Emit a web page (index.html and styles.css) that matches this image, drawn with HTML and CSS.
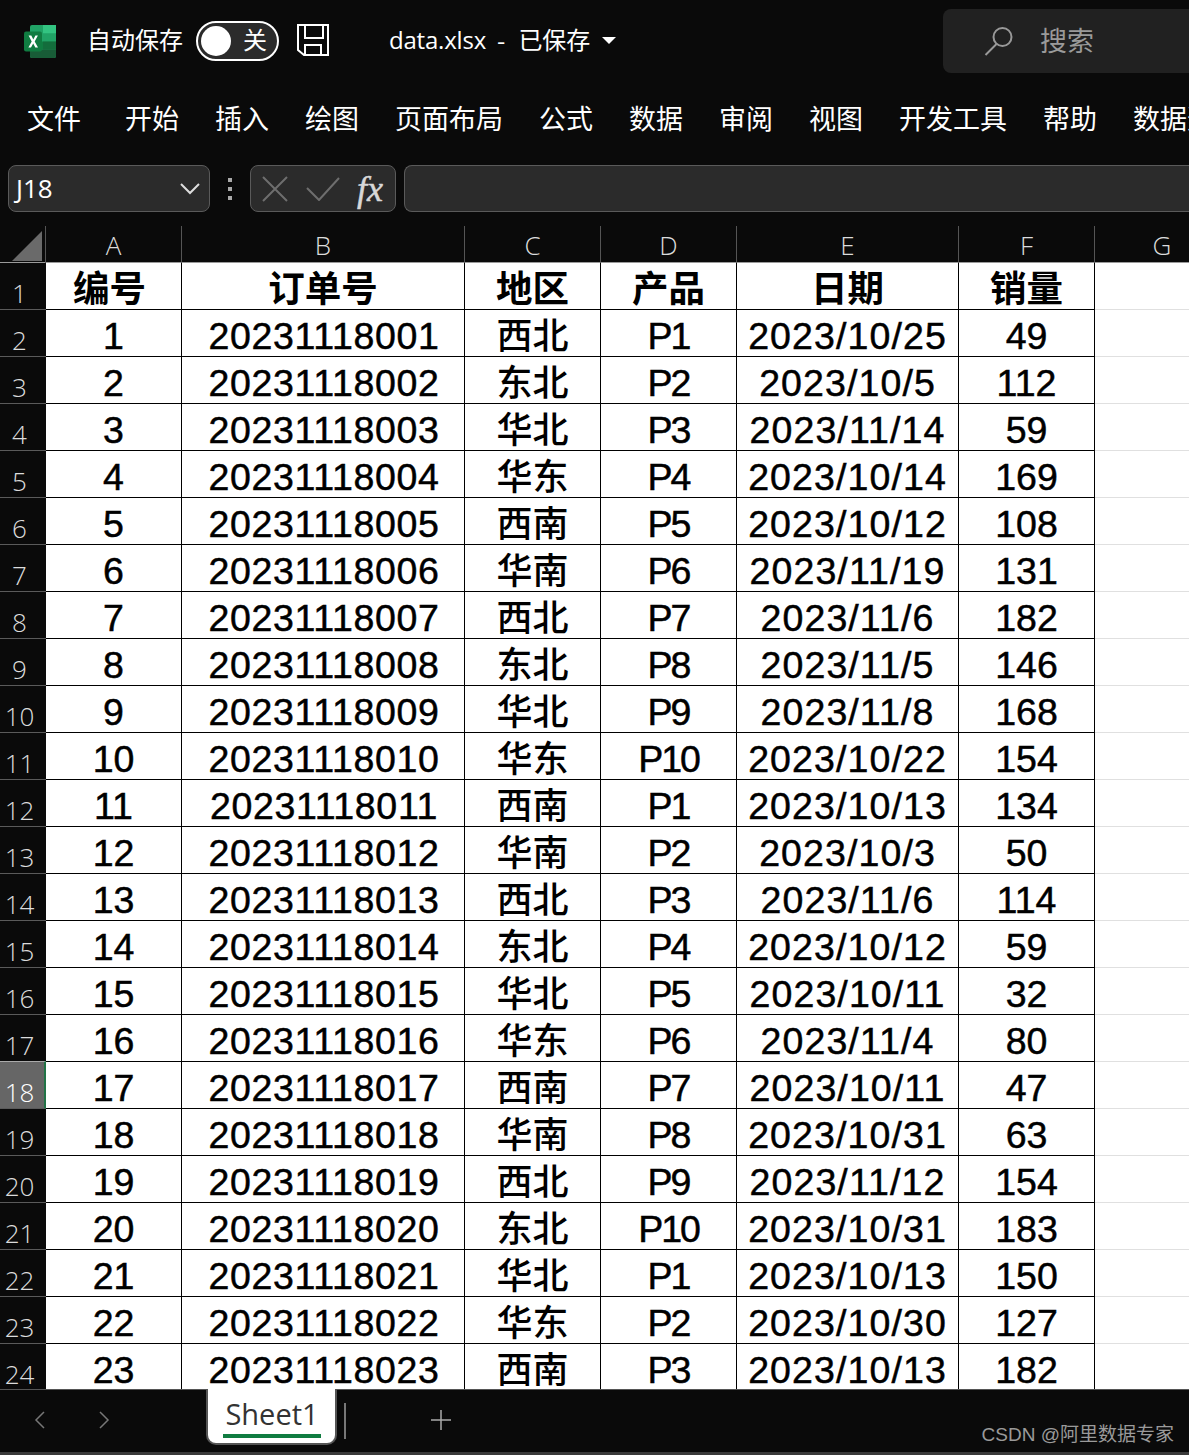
FILE: index.html
```html
<!DOCTYPE html>
<html lang="zh-CN">
<head>
<meta charset="utf-8">
<title>data.xlsx</title>
<link rel="stylesheet" href="styles.css">
</head>
<body>
<div class="app">
  <header class="titlebar">
    <svg class="xl-icon" viewBox="0 0 32 33" width="32" height="33">
      <rect x="6" y="0" width="26" height="33" rx="2" fill="#21a366"/>
      <rect x="19" y="0" width="13" height="8.500" fill="#33c481"/>
      <rect x="19" y="8.500" width="13" height="8" fill="#21a366"/>
      <rect x="6" y="16.500" width="26" height="8" fill="#107c41"/>
      <rect x="19" y="16.500" width="13" height="8" fill="#185c37" opacity=".45"/>
      <path d="M6 24.500h26V31a2 2 0 0 1-2 2H8a2 2 0 0 1-2-2z" fill="#185c37"/>
      <rect x="0" y="6.500" width="18" height="20" rx="2" fill="#107c41"/>
      <path d="M4.600 10.500h2.700l2 4 2.100-4h2.500l-3.200 5.900 3.300 6.100h-2.700l-2.100-4.100L7 22.500H4.400l3.300-6.100z" fill="#fff"/>
    </svg>
    <span class="autosave">自动保存</span>
    <span class="toggle"><span class="knob"></span><span class="toggle-text">关</span></span>
    <svg class="save-icon" viewBox="0 0 32 33" width="32" height="33" fill="none" stroke="#fff" stroke-width="2">
      <path d="M1 1h30v30H7l-6-5z"/>
      <path d="M8 1v13h18V1"/>
      <path d="M8 31V21h16v10"/>
    </svg>
    <span class="filename">data.xlsx</span>
    <span class="dash">-</span>
    <span class="saved">已保存</span>
    <span class="caret"></span>
    <div class="search">
      <svg class="search-icon" viewBox="0 0 30 30" width="30" height="30" fill="none" stroke="#999" stroke-width="2">
        <circle cx="18.500" cy="11" r="9"/>
        <path d="M12.500 18L1.500 29"/>
      </svg>
      <span class="search-text">搜索</span>
    </div>
  </header>
  <nav class="menu">
    <span class="menu-first">文件</span><span>开始</span><span>插入</span><span>绘图</span><span>页面布局</span><span>公式</span><span>数据</span><span>审阅</span><span>视图</span><span>开发工具</span><span>帮助</span><span>数据透视</span>
  </nav>
  <div class="formula">
    <div class="namebox">
      <span class="name">J18</span>
      <svg viewBox="0 0 20 12" width="20" height="12" fill="none" stroke="#ddd" stroke-width="2"><path d="M1 1l9 9 9-9"/></svg>
    </div>
    <div class="dots"><i></i><i></i><i></i></div>
    <div class="fxbox">
      <svg viewBox="0 0 26 26" width="26" height="26" fill="none" stroke="#6e6e6e" stroke-width="2"><path d="M1 1l24 24M25 1L1 25"/></svg>
      <svg class="check" viewBox="0 0 34 24" width="34" height="24" fill="none" stroke="#6e6e6e" stroke-width="2"><path d="M1 11l12 12L33 1"/></svg>
      <span class="fx">fx</span>
    </div>
    <div class="input"></div>
  </div>
  <main class="sheet">
    <div class="colheads">
      <div class="corner"><span class="tri"></span></div>
      <div class="ch">A</div><div class="ch">B</div><div class="ch">C</div><div class="ch">D</div><div class="ch">E</div><div class="ch">F</div><div class="ch last">G</div>
    </div>
    <div class="grid">
      <div class="rh">1</div><div class="c th th-a">编号</div><div class="c th">订单号</div><div class="c th">地区</div><div class="c th">产品</div><div class="c th">日期</div><div class="c th">销量</div><div class="e"></div>
      <div class="rh">2</div><div class="c">1</div><div class="c id">20231118001</div><div class="c zh">西北</div><div class="c pr">P1</div><div class="c dt">2023/10/25</div><div class="c">49</div><div class="e"></div>
      <div class="rh">3</div><div class="c">2</div><div class="c id">20231118002</div><div class="c zh">东北</div><div class="c pr">P2</div><div class="c dt">2023/10/5</div><div class="c">112</div><div class="e"></div>
      <div class="rh">4</div><div class="c">3</div><div class="c id">20231118003</div><div class="c zh">华北</div><div class="c pr">P3</div><div class="c dt">2023/11/14</div><div class="c">59</div><div class="e"></div>
      <div class="rh">5</div><div class="c">4</div><div class="c id">20231118004</div><div class="c zh">华东</div><div class="c pr">P4</div><div class="c dt">2023/10/14</div><div class="c">169</div><div class="e"></div>
      <div class="rh">6</div><div class="c">5</div><div class="c id">20231118005</div><div class="c zh">西南</div><div class="c pr">P5</div><div class="c dt">2023/10/12</div><div class="c">108</div><div class="e"></div>
      <div class="rh">7</div><div class="c">6</div><div class="c id">20231118006</div><div class="c zh">华南</div><div class="c pr">P6</div><div class="c dt">2023/11/19</div><div class="c">131</div><div class="e"></div>
      <div class="rh">8</div><div class="c">7</div><div class="c id">20231118007</div><div class="c zh">西北</div><div class="c pr">P7</div><div class="c dt">2023/11/6</div><div class="c">182</div><div class="e"></div>
      <div class="rh">9</div><div class="c">8</div><div class="c id">20231118008</div><div class="c zh">东北</div><div class="c pr">P8</div><div class="c dt">2023/11/5</div><div class="c">146</div><div class="e"></div>
      <div class="rh">10</div><div class="c">9</div><div class="c id">20231118009</div><div class="c zh">华北</div><div class="c pr">P9</div><div class="c dt">2023/11/8</div><div class="c">168</div><div class="e"></div>
      <div class="rh">11</div><div class="c">10</div><div class="c id">20231118010</div><div class="c zh">华东</div><div class="c pr">P10</div><div class="c dt">2023/10/22</div><div class="c">154</div><div class="e"></div>
      <div class="rh">12</div><div class="c">11</div><div class="c id">20231118011</div><div class="c zh">西南</div><div class="c pr">P1</div><div class="c dt">2023/10/13</div><div class="c">134</div><div class="e"></div>
      <div class="rh">13</div><div class="c">12</div><div class="c id">20231118012</div><div class="c zh">华南</div><div class="c pr">P2</div><div class="c dt">2023/10/3</div><div class="c">50</div><div class="e"></div>
      <div class="rh">14</div><div class="c">13</div><div class="c id">20231118013</div><div class="c zh">西北</div><div class="c pr">P3</div><div class="c dt">2023/11/6</div><div class="c">114</div><div class="e"></div>
      <div class="rh">15</div><div class="c">14</div><div class="c id">20231118014</div><div class="c zh">东北</div><div class="c pr">P4</div><div class="c dt">2023/10/12</div><div class="c">59</div><div class="e"></div>
      <div class="rh">16</div><div class="c">15</div><div class="c id">20231118015</div><div class="c zh">华北</div><div class="c pr">P5</div><div class="c dt">2023/10/11</div><div class="c">32</div><div class="e"></div>
      <div class="rh">17</div><div class="c">16</div><div class="c id">20231118016</div><div class="c zh">华东</div><div class="c pr">P6</div><div class="c dt">2023/11/4</div><div class="c">80</div><div class="e"></div>
      <div class="rh active">18</div><div class="c">17</div><div class="c id">20231118017</div><div class="c zh">西南</div><div class="c pr">P7</div><div class="c dt">2023/10/11</div><div class="c">47</div><div class="e"></div>
      <div class="rh">19</div><div class="c">18</div><div class="c id">20231118018</div><div class="c zh">华南</div><div class="c pr">P8</div><div class="c dt">2023/10/31</div><div class="c">63</div><div class="e"></div>
      <div class="rh">20</div><div class="c">19</div><div class="c id">20231118019</div><div class="c zh">西北</div><div class="c pr">P9</div><div class="c dt">2023/11/12</div><div class="c">154</div><div class="e"></div>
      <div class="rh">21</div><div class="c">20</div><div class="c id">20231118020</div><div class="c zh">东北</div><div class="c pr">P10</div><div class="c dt">2023/10/31</div><div class="c">183</div><div class="e"></div>
      <div class="rh">22</div><div class="c">21</div><div class="c id">20231118021</div><div class="c zh">华北</div><div class="c pr">P1</div><div class="c dt">2023/10/13</div><div class="c">150</div><div class="e"></div>
      <div class="rh">23</div><div class="c">22</div><div class="c id">20231118022</div><div class="c zh">华东</div><div class="c pr">P2</div><div class="c dt">2023/10/30</div><div class="c">127</div><div class="e"></div>
      <div class="rh">24</div><div class="c">23</div><div class="c id">20231118023</div><div class="c zh">西南</div><div class="c pr">P3</div><div class="c dt">2023/10/13</div><div class="c">182</div><div class="e"></div>
    </div>
  </main>
  <footer class="tabs">
    <svg class="nav-prev" viewBox="0 0 11 18" width="11" height="18" fill="none" stroke="#777" stroke-width="1.500"><path d="M10 1L2 9l8 8"/></svg>
    <svg class="nav-next" viewBox="0 0 11 18" width="11" height="18" fill="none" stroke="#777" stroke-width="1.500"><path d="M1 1l8 8-8 8"/></svg>
    <div class="tab"><span class="tab-label">Sheet1</span></div>
    <span class="tab-sep"></span>
    <svg class="plus" viewBox="0 0 20 20" width="20" height="20" stroke="#aaa" stroke-width="1.500"><path d="M10 0v20M0 10h20"/></svg>
    <span class="mark">CSDN @阿里数据专家</span>
  </footer>
</div>
</body>
</html>
```
FILE: styles.css
```css
* { box-sizing: border-box; }
html, body { margin: 0; padding: 0; }
body { background: #0a0a0a; font-family: "Noto Sans CJK SC", "Noto Sans", sans-serif; color: #fff; }
.app { width: 1189px; height: 1455px; display: flex; flex-direction: column; overflow: hidden; border-bottom: 3px solid #3a3a3a; }

.titlebar { height: 81px; flex: none; display: flex; align-items: center; padding-left: 24px; white-space: nowrap; }
.xl-icon { flex: none; margin-top: 1px; }
.autosave { font-size: 24px; font-weight: 400; margin: 0 0 3px 31px; line-height: 1; }
.toggle { margin-left: 13px; width: 83px; height: 40px; border: 2px solid #fff; border-radius: 20px; background: #2b2b2b; display: flex; align-items: center; padding-left: 3px; }
.knob { width: 30px; height: 30px; border-radius: 50%; background: #fff; flex: none; }
.toggle-text { font-size: 24px; font-weight: 400; line-height: 1; margin: 0 0 3px 12px; }
.save-icon { flex: none; margin: 0 0 1px 18px; }
.filename { font-family: "Open Sans", sans-serif; font-size: 24px; margin: 0 0 2px 60px; line-height: 1; letter-spacing: -.2px; }
.dash { font-size: 24px; font-weight: 400; margin: 0 0 2px 11px; }
.saved { font-size: 24px; font-weight: 400; margin: 0 0 3px 13px; line-height: 1; }
.caret { margin-left: 12px; border-left: 7px solid transparent; border-right: 7px solid transparent; border-top: 7px solid #fff; }
.search { margin-left: auto; margin-top: 1px; width: 246px; height: 64px; background: #212121; border-radius: 8px 0 0 8px; display: flex; align-items: center; padding-left: 41px; flex: none; }
.search-text { font-size: 27px; font-weight: 400; color: #9a9a9a; margin: 0 0 4px 26px; line-height: 1; }

.menu { height: 84px; flex: none; display: flex; gap: 36px; align-items: flex-start; padding: 18px 0 0 27px; font-size: 27px; font-weight: 400; line-height: 38px; white-space: nowrap; }
.menu-first { margin-right: 8px; }

.formula { height: 61px; flex: none; display: flex; align-items: flex-start; padding-left: 8px; }
.namebox { width: 202px; height: 47px; background: #2b2b2b; border: 1px solid #5a5a5a; border-radius: 8px; display: flex; align-items: center; justify-content: space-between; padding: 0 9px 0 7px; }
.name { font-family: "Open Sans", sans-serif; font-size: 26px; line-height: 1; margin-bottom: 2px; }
.dots { width: 40px; height: 47px; display: flex; flex-direction: column; align-items: center; justify-content: center; gap: 5px; }
.dots i { width: 4px; height: 4px; background: #aaa; display: block; }
.fxbox { width: 146px; height: 47px; background: #2b2b2b; border: 1px solid #5a5a5a; border-radius: 8px; display: flex; align-items: center; padding-left: 11px; }
.check { margin-left: 18px; }
.fx { font-family: "Liberation Serif", serif; font-style: italic; font-weight: 400; font-size: 36px; color: #d8d8d8; line-height: 1; margin-left: 17px; -webkit-text-stroke: .5px #d8d8d8; }
.input { width: 785px; height: 47px; margin-left: 8px; background: #2b2b2b; border: 1px solid #5a5a5a; border-right: 0; border-radius: 8px 0 0 8px; }

.sheet { flex: 1; min-height: 0; overflow: hidden; display: flex; flex-direction: column; }
.colheads, .grid { display: grid; grid-template-columns: 46px 136px 283px 136px 136px 222px 136px 94px; flex: none; }
.colheads { height: 37px; border-bottom: 1px solid #9a9a9a; }
.corner { border-right: 1px solid #555; display: flex; align-items: flex-end; justify-content: flex-end; padding: 0 3px 2px 0; }
.tri { width: 0; height: 0; border-left: 30px solid transparent; border-bottom: 30px solid #6a6a6a; }
.ch { border-right: 1px solid #555; text-align: center; font-family: "Open Sans", sans-serif; font-weight: 300; font-size: 26px; line-height: 36px; padding-top: 1px; color: #dcdcdc; }
.ch.last { border-right: 0; padding-left: 40px; }
.grid { grid-auto-rows: 47px; }
.rh { background: #0a0a0a; border-bottom: 1px solid #5a5a5a; padding: 15px 7px 0 0; text-align: center; font-family: "Open Sans", sans-serif; font-weight: 300; font-size: 26px; line-height: 30px; color: #dcdcdc; }
.rh.active { background: #666; border-top: 1px solid #aaa; border-right: 2px solid #217346; color: #fff; margin-top: -1px; padding-right: 5px; height: 48px; }
.c { background: #fff; color: #000; border-right: 1px solid #000; border-bottom: 1px solid #000; padding-top: 6px; text-align: center; font-family: "Liberation Sans", sans-serif; font-size: 37.500px; line-height: 40px; -webkit-text-stroke: .5px #000; white-space: nowrap; }
.id { letter-spacing: .65px; padding-left: 2px; }
.dt { letter-spacing: 1.100px; }
.pr { letter-spacing: -2px; }
.zh, .th { font-family: "Noto Sans CJK SC", sans-serif; font-size: 36px; font-weight: 500; padding-top: 0; line-height: 46px; -webkit-text-stroke: 0; }
.th { font-weight: 700; font-size: 36.500px; padding-top: 1px; line-height: 45px; }
.th-a { padding-right: 8px; }
.e { background: #fff; border-bottom: 1px solid #e0e0e0; }

.tabs { height: 63px; flex: none; background: #0a0a0a; border-top: 1px solid #555; position: relative; display: flex; align-items: flex-start; }
.nav-prev { margin: 21px 0 0 34px; flex: none; }
.nav-next { margin: 21px 0 0 54px; flex: none; }
.tab { width: 131px; height: 56px; margin: -1px 0 0 96px; background: #fff; border: 2px solid #555; border-top: 0; border-radius: 0 0 10px 10px; padding: 0 14px 0 15px; flex: none; color: #333; text-align: center; }
.tab-label { display: block; font-family: "Open Sans", sans-serif; font-size: 29px; line-height: 38px; padding-top: 6px; height: 49px; border-bottom: 4px solid #107c41; }
.tab-sep { width: 2px; height: 36px; background: #777; margin: 13px 0 0 7px; flex: none; }
.plus { margin: 20px 0 0 85px; flex: none; }
.mark { position: absolute; right: 15px; bottom: 5px; font-family: "Liberation Sans", "Noto Sans CJK SC", sans-serif; font-size: 19px; line-height: 24px; color: #9a9a9a; }
```
